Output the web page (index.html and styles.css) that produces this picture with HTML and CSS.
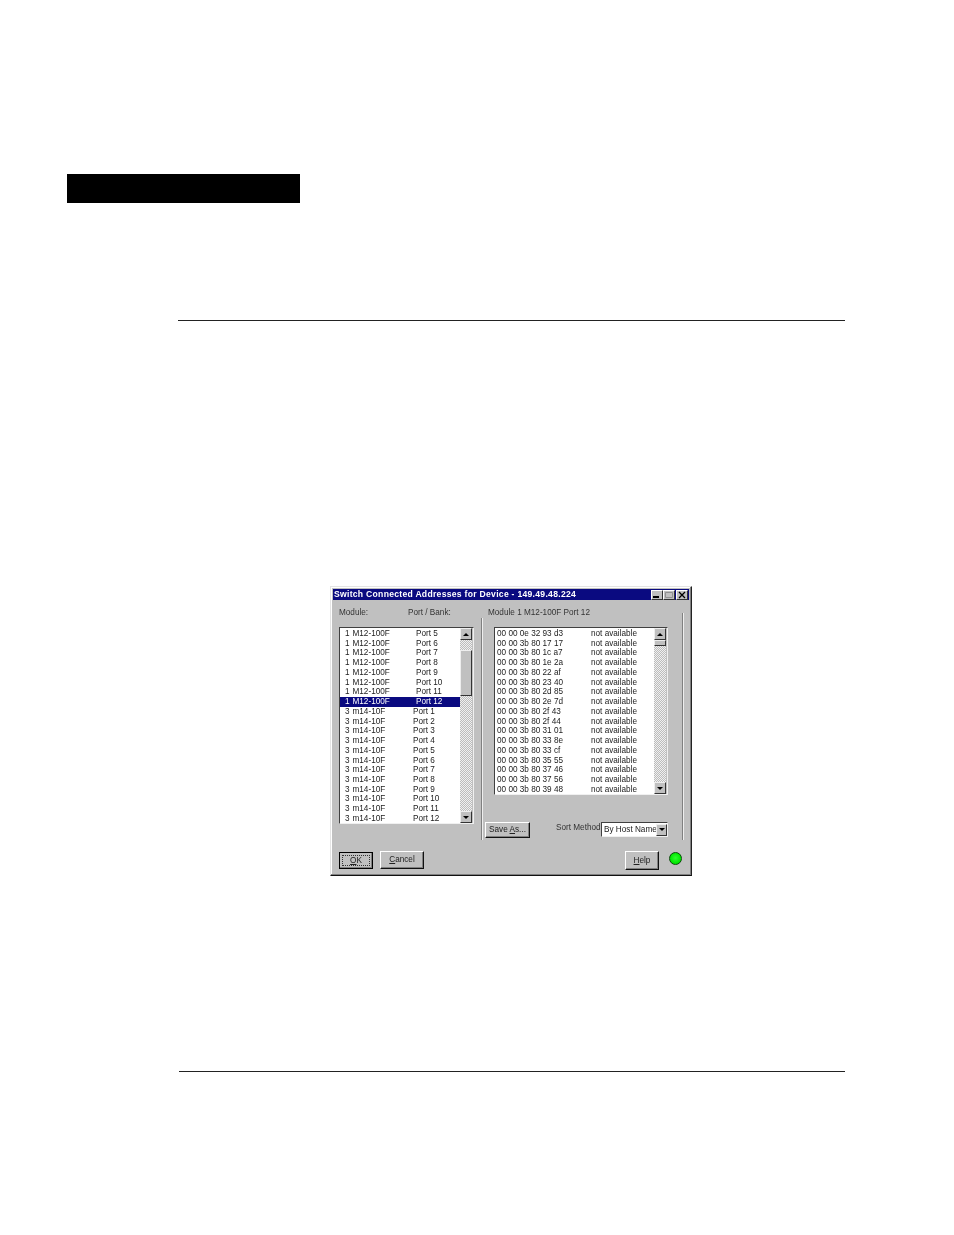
FILE: index.html
```html
<!DOCTYPE html>
<html lang="en">
<head>
<meta charset="utf-8">
<title>Switch Connected Addresses</title>
<link rel="stylesheet" href="styles.css">
</head>
<body>
<div class="page">
  <div class="black-bar"></div>
  <div class="rule rule-top"></div>
  <section class="dialog">
    <header class="titlebar">
      <span class="title">Switch Connected Addresses for Device - 149.49.48.224</span>
      <span class="win-btns">
        <span class="win-btn"><svg width="10" height="8" viewBox="0 0 10 8"><rect x="1" y="5" width="6" height="2" fill="#000"/></svg></span>
        <span class="win-btn win-off"><svg width="10" height="8" viewBox="0 0 10 8"><path d="M1.5 1.5h7v5h-7z" fill="none" stroke="#909090"/></svg></span>
        <span class="win-btn win-close"><svg width="10" height="8" viewBox="0 0 10 8"><path d="M2 1l6 6M8 1l-6 6" stroke="#000" stroke-width="1.3"/></svg></span>
      </span>
    </header>
    <div class="panels">
      <div class="left-panel">
        <div class="heads"><span class="head-mod">Module:</span><span>Port / Bank:</span></div>
        <div class="listbox listbox-left">
          <ul class="rows">
            <li class="row m12"><span class="n">1</span><span class="m">M12-100F</span><span class="p">Port 5</span></li>
            <li class="row m12"><span class="n">1</span><span class="m">M12-100F</span><span class="p">Port 6</span></li>
            <li class="row m12"><span class="n">1</span><span class="m">M12-100F</span><span class="p">Port 7</span></li>
            <li class="row m12"><span class="n">1</span><span class="m">M12-100F</span><span class="p">Port 8</span></li>
            <li class="row m12"><span class="n">1</span><span class="m">M12-100F</span><span class="p">Port 9</span></li>
            <li class="row m12"><span class="n">1</span><span class="m">M12-100F</span><span class="p">Port 10</span></li>
            <li class="row m12"><span class="n">1</span><span class="m">M12-100F</span><span class="p">Port 11</span></li>
            <li class="row m12 selected"><span class="n">1</span><span class="m">M12-100F</span><span class="p">Port 12</span></li>
            <li class="row m14"><span class="n">3</span><span class="m">m14-10F</span><span class="p">Port 1</span></li>
            <li class="row m14"><span class="n">3</span><span class="m">m14-10F</span><span class="p">Port 2</span></li>
            <li class="row m14"><span class="n">3</span><span class="m">m14-10F</span><span class="p">Port 3</span></li>
            <li class="row m14"><span class="n">3</span><span class="m">m14-10F</span><span class="p">Port 4</span></li>
            <li class="row m14"><span class="n">3</span><span class="m">m14-10F</span><span class="p">Port 5</span></li>
            <li class="row m14"><span class="n">3</span><span class="m">m14-10F</span><span class="p">Port 6</span></li>
            <li class="row m14"><span class="n">3</span><span class="m">m14-10F</span><span class="p">Port 7</span></li>
            <li class="row m14"><span class="n">3</span><span class="m">m14-10F</span><span class="p">Port 8</span></li>
            <li class="row m14"><span class="n">3</span><span class="m">m14-10F</span><span class="p">Port 9</span></li>
            <li class="row m14"><span class="n">3</span><span class="m">m14-10F</span><span class="p">Port 10</span></li>
            <li class="row m14"><span class="n">3</span><span class="m">m14-10F</span><span class="p">Port 11</span></li>
            <li class="row m14"><span class="n">3</span><span class="m">m14-10F</span><span class="p">Port 12</span></li>
          </ul>
          <div class="scrollbar">
            <span class="sb-btn"><span class="arrow-up"></span></span>
            <span class="sb-track track-short"></span>
            <span class="sb-thumb thumb-left"></span>
            <span class="sb-track"></span>
            <span class="sb-btn"><span class="arrow-down"></span></span>
          </div>
        </div>
      </div>
      <div class="group">
        <div class="group-label">Module 1 M12-100F Port 12</div>
        <div class="listbox listbox-right">
          <ul class="rows">
            <li class="row addr"><span class="a">00 00 0e 32 93 d3</span><span class="s">not available</span></li>
            <li class="row addr"><span class="a">00 00 3b 80 17 17</span><span class="s">not available</span></li>
            <li class="row addr"><span class="a">00 00 3b 80 1c a7</span><span class="s">not available</span></li>
            <li class="row addr"><span class="a">00 00 3b 80 1e 2a</span><span class="s">not available</span></li>
            <li class="row addr"><span class="a">00 00 3b 80 22 af</span><span class="s">not available</span></li>
            <li class="row addr"><span class="a">00 00 3b 80 23 40</span><span class="s">not available</span></li>
            <li class="row addr"><span class="a">00 00 3b 80 2d 85</span><span class="s">not available</span></li>
            <li class="row addr"><span class="a">00 00 3b 80 2e 7d</span><span class="s">not available</span></li>
            <li class="row addr"><span class="a">00 00 3b 80 2f 43</span><span class="s">not available</span></li>
            <li class="row addr"><span class="a">00 00 3b 80 2f 44</span><span class="s">not available</span></li>
            <li class="row addr"><span class="a">00 00 3b 80 31 01</span><span class="s">not available</span></li>
            <li class="row addr"><span class="a">00 00 3b 80 33 8e</span><span class="s">not available</span></li>
            <li class="row addr"><span class="a">00 00 3b 80 33 cf</span><span class="s">not available</span></li>
            <li class="row addr"><span class="a">00 00 3b 80 35 55</span><span class="s">not available</span></li>
            <li class="row addr"><span class="a">00 00 3b 80 37 46</span><span class="s">not available</span></li>
            <li class="row addr"><span class="a">00 00 3b 80 37 56</span><span class="s">not available</span></li>
            <li class="row addr"><span class="a">00 00 3b 80 39 48</span><span class="s">not available</span></li>
          </ul>
          <div class="scrollbar">
            <span class="sb-btn"><span class="arrow-up"></span></span>
            <span class="sb-thumb thumb-right"></span>
            <span class="sb-track"></span>
            <span class="sb-btn"><span class="arrow-down"></span></span>
          </div>
        </div>
        <div class="group-foot">
          <span class="btn btn-save"><span>Save <u>A</u>s...</span></span>
          <span class="sort-label">Sort Method</span>
          <span class="combo"><span class="combo-text">By Host Name</span><span class="sb-btn combo-btn"><span class="arrow-down"></span></span></span>
        </div>
      </div>
    </div>
    <footer class="actions">
      <span class="btn btn-ok"><span class="focus"><u>O</u>K</span></span>
      <span class="btn btn-cancel"><span><u>C</u>ancel</span></span>
      <span class="spacer"></span>
      <span class="btn btn-help"><span><u>H</u>elp</span></span>
      <span class="led"></span>
    </footer>
  </section>
  <div class="rule rule-bottom"></div>
</div>
</body>
</html>
```
FILE: styles.css
```css
* { box-sizing: border-box; }
html, body { margin: 0; padding: 0; background: #fff; }
body { height: 1235px; overflow: hidden; font-family: "Liberation Sans", Arial, sans-serif; }
.page { padding-top: 174px; }
.black-bar { width: 233px; height: 29px; margin-left: 67px; background: #000; }
.rule { height: 1px; background: #222; }
.rule-top { width: 667px; margin: 117px 0 0 178px; }
.rule-bottom { width: 666px; margin: 195px 0 0 179px; }

.dialog {
  width: 362px; height: 290px; margin: 265px 0 0 330px; padding: 2px 2px 0 2px;
  display: flex; flex-direction: column;
  background: #c0c0c0; color: #222;
  font-size: 8.2px; line-height: 9.74px;
  border: 1px solid; border-color: #e4e4e4 #222 #111 #e4e4e4;
  box-shadow: inset -1px -1px 0 #808080, inset 1px 1px 0 #fff;
  filter: blur(0.25px);
}
.titlebar {
  height: 11px; flex: none; display: flex; align-items: center; justify-content: space-between;
  background: #0a0a80; color: #fff; padding: 0 1px;
}
.title { font-weight: 700; font-size: 8.6px; letter-spacing: 0.033em; white-space: nowrap; }
.win-btns { display: flex; }
.win-btn {
  width: 12px; height: 10px; display: flex; align-items: center; justify-content: center;
  background: #c0c0c0; border: 1px solid; border-color: #fff #333 #333 #fff;
}
.win-close { margin-left: 1px; }
.win-btn svg { display: block; flex: none; }

.panels { display: flex; flex: none; height: 241px; }
.left-panel { width: 148px; padding: 8px 0 0 6px; }
.heads { display: flex; height: 19px; color: #333; }
.head-mod { width: 69px; }

.listbox {
  display: flex; background: #fff; overflow: hidden;
  border: 1px solid; border-color: #404040 #f0f0f0 #f0f0f0 #404040;
}
.listbox-left { width: 135px; height: 197px; }
.rows { list-style: none; margin: 0; padding: 1px 0 0; flex: 1; min-width: 0; overflow: hidden; }
.row { display: flex; height: 9.74px; white-space: nowrap; color: #222; }
.n { width: 12.5px; padding-left: 5px; flex: none; }
.m12 .m { width: 63.5px; flex: none; }
.m14 .m { width: 60.5px; flex: none; }
.selected { background: #0a0a80; color: #fff; }
.addr .a { width: 96px; padding-left: 2px; flex: none; }

.scrollbar { width: 13px; flex: none; display: flex; flex-direction: column; background: #c0c0c0; }
.sb-btn {
  flex: none; width: 12px; height: 12px; display: flex; align-items: center; justify-content: center;
  background: #c0c0c0; border: 1px solid; border-color: #eee #333 #333 #eee;
}
.sb-track, .sb-thumb { flex: none; width: 12px; }
.sb-track { flex: 1; background: conic-gradient(#bcbcbc 25%, #f0f0f0 0 50%, #bcbcbc 0 75%, #f0f0f0 0) 0 0 / 2px 2px; }
.track-short { flex: none; height: 10px; }
.sb-thumb { background: #c0c0c0; border: 1px solid; border-color: #eee #333 #333 #eee; }
.thumb-left { height: 46px; }
.thumb-right { height: 6px; }
.arrow-up { width: 0; height: 0; border: 3px solid transparent; border-top: 0; border-bottom: 3px solid #000; }
.arrow-down { width: 0; height: 0; border: 3px solid transparent; border-bottom: 0; border-top: 3px solid #000; }

.group {
  width: 202px; margin-top: 13px; position: relative;
  border-left: 1px solid #808080; border-right: 1px solid #808080;
  box-shadow: inset 1px 0 0 #eee, 1px 0 0 #eee;
  height: 227px;
}
.group-label { position: absolute; left: -1px; top: -5px; padding: 0 2px 0 7px; background: #c0c0c0; white-space: nowrap; color: #333; }
.listbox-right { width: 174px; height: 168px; margin: 14px 0 0 12px; }
.group-foot { display: flex; align-items: flex-start; margin-top: 27px; padding-left: 3px; }
.btn {
  display: flex; align-items: center; justify-content: center; flex: none; white-space: nowrap; color: #222;
  background: #c0c0c0; border: 1px solid; border-color: #fff #111 #111 #fff;
  box-shadow: inset -1px -1px 0 #808080;
}
.btn-save { width: 45px; height: 16px; }
.sort-label { margin: 0 1px 0 26px; padding-top: 1px; white-space: nowrap; width: 44px; color: #333; }
.combo {
  display: flex; align-items: center; width: 67px; height: 15px; background: #fff;
  border: 1px solid; border-color: #404040 #f0f0f0 #f0f0f0 #404040;
}
.combo-text { flex: 1; min-width: 0; padding-left: 2px; white-space: nowrap; }
.combo-btn { width: 11px; height: 12px; }

.actions { display: flex; align-items: flex-start; padding: 10px 0 0 6px; }
.btn-ok { width: 34px; height: 17px; margin-top: 1px; border: 1px solid #000; box-shadow: inset -1px -1px 0 #808080; padding: 2px; }
.focus { flex: 1; height: 100%; display: flex; align-items: center; justify-content: center; outline: 1px dotted #333; outline-offset: -1px; }
.btn-cancel { width: 44px; height: 18px; margin-left: 7px; }
.spacer { flex: 1; }
.btn-help { width: 34px; height: 19px; margin-right: 1px; }
.led {
  flex: none; width: 13px; height: 13px; margin: 1px 7px 0 9px; border-radius: 50%;
  background: radial-gradient(circle at 50% 45%, #30ff30, #00e800 65%);
  border: 1px solid #084a08;
}
```
